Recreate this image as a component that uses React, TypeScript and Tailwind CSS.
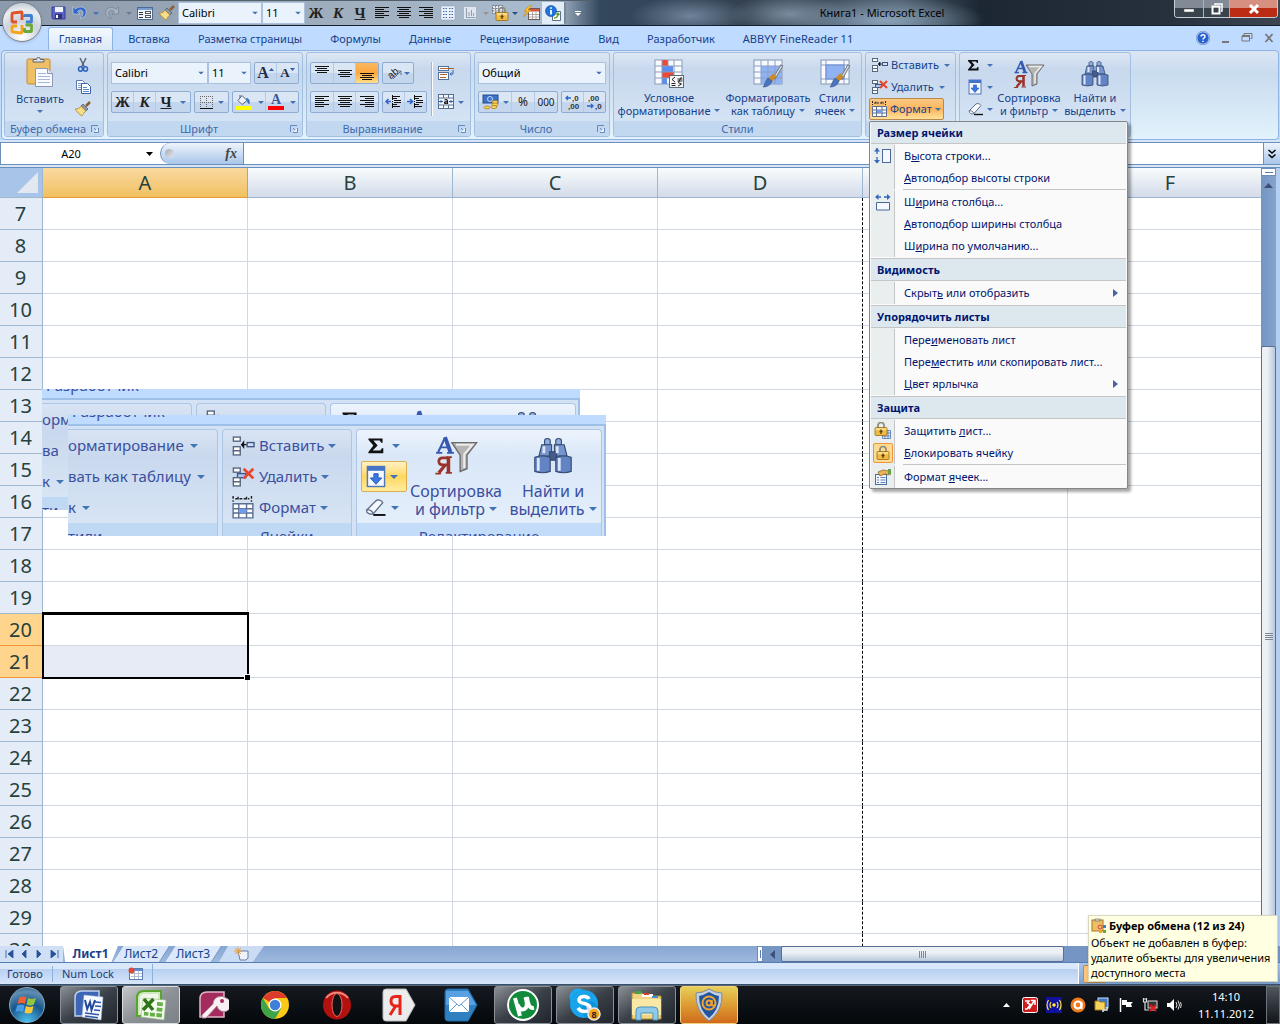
import React from 'react';

type IconProps = { w?: number; h?: number };

function Svg({ w = 16, h = 16, vb, children }: { w?: number; h?: number; vb?: string; children: React.ReactNode }) {
  return (
    <svg width={w} height={h} viewBox={vb ?? `0 0 ${w} ${h}`} className="block shrink-0" aria-hidden="true">
      {children}
    </svg>
  );
}

/* ---------- small glyphs ---------- */

const Caret = ({ color = '#4273b5', w = 6, h = 3 }: { color?: string; w?: number; h?: number }) => (
  <Svg w={w} h={h} vb={`0 0 ${w} ${h}`}><path d={`M0 0h${w}L${w / 2} ${h}z`} fill={color} /></Svg>
);

const Lines = ({ rows, color = '#111' }: { rows: [number, number, number][]; color?: string }) => (
  <Svg w={16} h={16}>
    {rows.map(([x, y, len], i) => <rect key={i} x={x} y={y} width={len} height={1} fill={color} />)}
  </Svg>
);

const AlignLeft = () => <Lines rows={[[1, 2, 14], [1, 4, 9], [1, 6, 14], [1, 8, 9], [1, 10, 14], [1, 12, 9]]} />;
const AlignCenter = () => <Lines rows={[[1, 2, 14], [3, 4, 10], [1, 6, 14], [3, 8, 10], [1, 10, 14], [3, 12, 10]]} />;
const AlignRight = () => <Lines rows={[[1, 2, 14], [6, 4, 9], [1, 6, 14], [6, 8, 9], [1, 10, 14], [6, 12, 9]]} />;
const AlignTop = () => <Lines rows={[[1, 1, 14], [3, 3, 10], [1, 5, 14], [3, 7, 10]]} />;
const AlignMiddle = () => <Lines rows={[[1, 5, 14], [3, 7, 10], [1, 9, 14], [3, 11, 10]]} />;
const AlignBottom = () => <Lines rows={[[1, 8, 14], [3, 10, 10], [1, 12, 14], [3, 14, 10]]} />;

const SaveIcon = () => (
  <Svg>
    <path d="M1 2h13v12H2l-1-1z" fill="#5a63c9" stroke="#3a3f94" />
    <rect x="4" y="2" width="8" height="5" fill="#eef2fb" />
    <rect x="4" y="9" width="7" height="5" fill="#2f3273" />
    <rect x="5" y="10" width="2" height="3" fill="#fff" />
  </Svg>
);
const UndoIcon = () => (
  <Svg><path d="M1 1.500v7.500h7L5.500 6.500C8 3.500 12 5 11 9c-.5 2-2 3.500-3 4.500 4-.5 7-4 6-8C12.500 1.500 7 1 3.500 4z" fill="#2f66cc" stroke="#dfe8f5" strokeWidth=".5" /></Svg>
);
const RedoIcon = () => (
  <Svg><path d="M14.500 2v7H8l2.300-2.300C8 4 4.200 5 4.700 9c.3 2 1.500 3 2.500 4.500C3 12.500 1 9 2 6c1.500-4 6.500-4.500 10-1.700z" fill="#a9b4c1" stroke="#6f7d8e" strokeWidth=".7" /></Svg>
);
const FormIcon = () => (
  <Svg>
    <rect x=".5" y="2.500" width="15" height="12" fill="#eef4fc" stroke="#4c6a96" />
    <rect x="1" y="3" width="14" height="2" fill="#7a9cd0" />
    <path d="M2 7.500h4M2 9.500h4M2 12.500h4" stroke="#333" />
    <rect x="8.500" y="6.500" width="5" height="2" fill="#fff" stroke="#555" />
    <rect x="8.500" y="10.500" width="5" height="2" fill="#fff" stroke="#555" />
  </Svg>
);
const BrushIcon = () => (
  <Svg>
    <path d="M15 1l-4 4" stroke="#8b5f33" strokeWidth="2.500" />
    <path d="M8 3l5 5-2 2-5-5z" fill="#8d97a8" stroke="#4d5665" strokeWidth=".7" />
    <path d="M6 5l5 5c-2 1-2.500 3-4 5-2-1-5-4-7-7 3 0 5-1 6-3z" fill="#f2d779" stroke="#a8802d" strokeWidth=".7" />
    <path d="M3 9l5 4M5 8l4 3" stroke="#fff3b8" strokeWidth=".7" />
  </Svg>
);
const ColumnsIcon = () => (
  <Svg>
    <rect x="1" y="1" width="14" height="14" fill="#eaf0f8" stroke="#8fa3bf" strokeWidth=".6" />
    <path d="M3 3.500h4M9 3.500h4M3 6.500h4M9 6.500h4M3 9.500h4M9 9.500h4M3 12.500h4M9 12.500h4" stroke="#4c6db0" strokeDasharray="1.500 1" />
  </Svg>
);
const ChartFaded = () => (
  <Svg>
    <rect x="1.500" y="1.500" width="13" height="13" fill="#dfe6ee" stroke="#a7b4c4" />
    <path d="M4.500 3v9.500h9M7 11V7M9.500 11V5M11.500 11V8" stroke="#8e9db0" fill="none" />
  </Svg>
);
const PadlockShape = ({ x = 0, y = 0 }: { x?: number; y?: number }) => (
  <g transform={`translate(${x} ${y})`}>
    <path d="M3 6V3.500a3 3 0 016 0V6" fill="none" stroke="#8f8a78" strokeWidth="1.700" />
    <rect x="0" y="5.500" width="12" height="8" rx="1" fill="#f0bb45" stroke="#9b6c17" strokeWidth=".8" />
    <rect x=".8" y="6.200" width="10.400" height="2" fill="#fbdf8f" />
    <path d="M6 7.500v4.500M4.500 9.500h3" stroke="#5b3d08" strokeWidth="1.300" />
  </g>
);
const LockCells = () => (
  <Svg w={18} h={18}>
    <path d="M1.500 1.500h10v8h-10zM1.500 4.500h10M1.500 7h10M4.500 1.500v8M7.500 1.500v8" stroke="#555e6a" fill="#e8eef5" strokeWidth=".8" strokeDasharray="2 1" />
    <PadlockShape x={5} y={3} />
  </Svg>
);
const PadlockIcon = () => <Svg w={16} h={16}><PadlockShape x={2} y={1} /></Svg>;
const ProtectIcon = () => (
  <Svg w={18} h={18}>
    <path d="M8.500 8.500h8v8h-8zM8.500 11h8M8.500 14h8M11 8.500v8M14 8.500v8" fill="#e7f0fb" stroke="#4c73ad" strokeWidth=".8" />
    <PadlockShape x={1} y={0} />
  </Svg>
);
const BoltTable = () => (
  <Svg w={17} h={16}>
    <rect x="5.500" y="3.500" width="11" height="11" fill="#fff" stroke="#6b5a5a" />
    <rect x="6" y="4" width="10" height="2.500" fill="#d8563d" />
    <path d="M6 9.500h10M6 12h10M9.500 6v8M13 6v8" stroke="#9e9a9a" strokeWidth=".8" />
    <path d="M7 0L1 6h3L0 12l8-7H5l4-5z" fill="#ffc535" stroke="#c97d13" strokeWidth=".6" />
  </Svg>
);
const InfoIcon = () => (
  <Svg w={17} h={16}>
    <path d="M7.500 6.500h8v9h-8z" fill="#fff" stroke="#5d6f8b" />
    <path d="M9 13c3 0 4-1 4-4M11.500 10L13 8l1.500 2" stroke="#5e9c22" fill="none" strokeWidth="1.300" />
    <circle cx="6" cy="6" r="5.500" fill="#1c74dc" stroke="#0d479a" strokeWidth=".6" />
    <path d="M6 5v4.500M6 2.300v1.500" stroke="#fff" strokeWidth="1.800" />
  </Svg>
);
const CutIcon = () => (
  <Svg w={14} h={16}>
    <path d="M4 1l4.500 9M10 1L5.500 10" stroke="#55606f" strokeWidth="1.400" />
    <ellipse cx="4.500" cy="12" rx="2" ry="2.200" fill="none" stroke="#2f62be" strokeWidth="1.500" />
    <ellipse cx="9.500" cy="12" rx="2" ry="2.200" fill="none" stroke="#2f62be" strokeWidth="1.500" />
  </Svg>
);
const CopyIcon = () => (
  <Svg>
    <path d="M1.500 1.500h6l2 2v7h-8z" fill="#fff" stroke="#5b79b0" />
    <path d="M3 4.500h4M3 6.500h4M3 8.500h3" stroke="#7fa0d5" />
    <path d="M6.500 4.500h6l3 3v7h-9z" fill="#fff" stroke="#3f65a8" />
    <path d="M8 8.500h4M8 10.500h6M8 12.500h6" stroke="#5a87cc" />
  </Svg>
);
const PasteIcon = () => (
  <Svg w={28} h={32}>
    <rect x="1" y="3" width="23" height="25" rx="1.500" fill="#efbf66" stroke="#c28b32" />
    <path d="M7 6V3.500h3.500a2 2 0 014 0H18V6z" fill="#dfe3ea" stroke="#5c6470" />
    <path d="M9.500 12.500h12l5 5v13h-17z" fill="#f7faff" stroke="#8b98b5" />
    <path d="M21.500 12.500v5h5" fill="#dbe5f5" stroke="#8b98b5" />
    <path d="M12 17.500h8M12 20.500h12M12 23.500h12M12 26.500h12" stroke="#a9b6d1" />
  </Svg>
);
const Launcher = () => (
  <Svg w={8} h={8}>
    <path d="M.5 7V.5H7" stroke="#6589bd" fill="none" />
    <path d="M7.500 3v4.500H3M3 3l3 3" stroke="#6589bd" fill="none" />
    <path d="M4 6.500h2.500V4" fill="#fff" stroke="#fff" strokeWidth=".5" />
  </Svg>
);
const BorderIcon = () => (
  <Svg w={15} h={15}>
    <path d="M1 1.500h13M1 7.500h13M1.500 1v12M7.500 1v12M13.500 1v12" stroke="#666" strokeDasharray="1 1" fill="none" />
    <rect x="1" y="13" width="13" height="1" fill="#111" />
  </Svg>
);
const FillIcon = () => (
  <Svg w={17} h={16}>
    <path d="M7 1.500l5 5-5 4-4-4z" fill="#eef3fb" stroke="#53617a" />
    <path d="M5 4V1" stroke="#53617a" />
    <path d="M11 4c3 0 4.500 2.500 3.500 6-2 0-2-2-3-4z" fill="#3b72cf" />
    <rect x="1" y="12" width="16" height="4" fill="#ffff00" />
  </Svg>
);
const OrientationIcon = () => (
  <Svg w={18} h={16}>
    <text x="2" y="11" fontSize="10" fontFamily="Liberation Sans" fill="#111" transform="rotate(-40 8 9)">ab</text>
    <path d="M7 14l8-8M15 10V6h-4" stroke="#63708a" fill="none" />
  </Svg>
);
const WrapIcon = () => (
  <Svg>
    <rect x=".5" y="1.500" width="10" height="4" fill="#fff" stroke="#54709e" />
    <path d="M2 3.500h14" stroke="#ad672d" />
    <rect x=".5" y="7.500" width="10" height="7" fill="#fff" stroke="#54709e" />
    <path d="M2 9.500h7M2 12.500h6" stroke="#ad672d" />
    <path d="M15 5v4h-3M13.500 7.500L12 9l1.500 1.500" stroke="#3768b8" fill="none" />
  </Svg>
);
const MergeIcon = () => (
  <Svg>
    <rect x=".5" y=".5" width="15" height="14" fill="#f4f8fd" stroke="#5a6e90" />
    <path d="M0 4h16M0 11h16M5.500 0v4M10.500 0v4M5.500 11v4M10.500 11v4" stroke="#5a6e90" />
    <path d="M6.500 6q3-1 3 1v3M9.500 7.500q-3 0-3 1.200t3 .3" stroke="#111" strokeWidth="1.200" fill="none" />
    <path d="M1 7.500h4M3 6v3M11 7.500h4M13 6v3" stroke="#2f62b4" />
  </Svg>
);
const Indent = ({ flip }: { flip?: boolean }) => (
  <Svg w={17} h={16}>
    <path d="M7 2.500h8M7 4.500h5M9 6.500h7M9 8.500h7M7 10.500h5M7 12.500h8" stroke="#111" strokeWidth="1.200" />
    <path d="M7.500 1v14" stroke="#111" strokeDasharray="1 1" />
    {flip ? <path d="M0 7.500h5M3 5l2.500 2.500L3 10" stroke="#2c63cc" strokeWidth="1.500" fill="none" /> : <path d="M1 7.500h5M3.500 5L1 7.500 3.500 10" stroke="#2c63cc" strokeWidth="1.500" fill="none" />}
  </Svg>
);
const CurrencyIcon = () => (
  <Svg w={17} h={16}>
    <rect x="1" y="1" width="15" height="8" fill="#3f72c6" stroke="#234c92" />
    <circle cx="8" cy="5" r="2.500" fill="none" stroke="#bfd5f5" />
    <ellipse cx="13" cy="8" rx="3" ry="1.600" fill="#f9d35e" stroke="#a97710" strokeWidth=".7" />
    <ellipse cx="13" cy="10.500" rx="3" ry="1.600" fill="#f9d35e" stroke="#a97710" strokeWidth=".7" />
    <ellipse cx="12" cy="13" rx="3" ry="1.600" fill="#f9d35e" stroke="#a97710" strokeWidth=".7" />
    <ellipse cx="5" cy="13.500" rx="3" ry="1.400" fill="#f9d35e" stroke="#a97710" strokeWidth=".7" />
  </Svg>
);
const Decimal = ({ more }: { more?: boolean }) => (
  <Svg w={18} h={18}>
    <text x={more ? 8 : 2} y="8" fontSize="8" fontWeight="700" fontFamily="Liberation Sans" fill="#333">{more ? ',0' : ',00'}</text>
    <text x={more ? 4 : 9} y="16" fontSize="8" fontWeight="700" fontFamily="Liberation Sans" fill="#333">{more ? ',00' : ',0'}</text>
    {more ? <path d="M2 5h5M4 3L2 5l2 2" stroke="#2c63cc" fill="none" strokeWidth="1.300" /> : <path d="M1 13h6M5 11l2 2-2 2" stroke="#2c63cc" fill="none" strokeWidth="1.300" />}
  </Svg>
);
const ConditionalIcon = () => (
  <Svg w={30} h={30}>
    <rect x="1" y="1" width="27" height="24" fill="#f8fbff" stroke="#8a9cb9" />
    <rect x="8" y="1" width="6" height="6" fill="#ee4a33" />
    <rect x="8" y="7" width="11" height="6" fill="#5a8ef0" />
    <rect x="8" y="13" width="12" height="6" fill="#ee4a33" />
    <rect x="8" y="19" width="5" height="6" fill="#5a8ef0" />
    <path d="M1 7h27M1 13h27M1 19h27M8 1v24M14 1v6M20 1v24" stroke="#8a9cb9" fill="none" />
    <rect x="15.500" y="16.500" width="14" height="12" fill="#f6f6f6" stroke="#5d6879" />
    <path d="M21 18l-3 2.500 3 2.500M17.500 24.500h4M17.500 26.500h4M23.500 20h5M23.500 22h5M27.500 18l-3 5M24 23.500l3.500 1.500-3.500 2" stroke="#222" fill="none" />
  </Svg>
);
const BigBrush = () => (
  <g>
    <path d="M29 6L21 20" stroke="#767b84" strokeWidth="3.200" />
    <path d="M28.500 7L22 18" stroke="#e7e9ee" strokeWidth="1.200" />
    <path d="M22 16l-5 5" stroke="#c9892e" strokeWidth="5" />
    <path d="M15 19l4 3c-1 4-5 6-9 6 2-2 2-6 5-9z" fill="#4b74bf" stroke="#36548d" strokeWidth=".6" />
  </g>
);
const TableFormatIcon = () => (
  <Svg w={31} h={30}>
    <rect x="1" y="1" width="28" height="24" fill="#f6f9fe" stroke="#8496b4" />
    <rect x="8" y="7" width="21" height="18" fill="#8fb2f3" />
    <path d="M1 7h28M1 13h28M1 19h28M8 1v24M15 1v24M22 1v24" stroke="#8b9fc4" fill="none" />
    <BigBrush />
  </Svg>
);
const CellStylesIcon = () => (
  <Svg w={31} h={30}>
    <rect x="1" y="1" width="28" height="24" fill="#f6f9fe" stroke="#8496b4" />
    <path d="M1 6h28M1 20h28M6 1v24M24 1v24" stroke="#8b9fc4" fill="none" />
    <rect x="6" y="6" width="18" height="14" fill="#8fb2f3" stroke="#6c8cd0" />
    <BigBrush />
  </Svg>
);
const InsertIcon = ({ w = 17, h = 16 }: IconProps) => (
  <Svg w={w} h={h} vb="0 0 17 16">
    <rect x="1.500" y="1.500" width="5" height="3" fill="#fff" stroke="#56667f" />
    <rect x="1.500" y="8.500" width="5" height="3" fill="#fff" stroke="#56667f" />
    <rect x="1.500" y="11.500" width="5" height="3" fill="#fff" stroke="#56667f" />
    <rect x="11.500" y="5.500" width="5" height="3" fill="#cfe0fb" stroke="#3d5680" />
    <path d="M7 7h4M9 5L7.500 7 9 9z" stroke="#111" fill="#111" strokeWidth=".8" />
  </Svg>
);
const DeleteIcon = ({ w = 17, h = 16 }: IconProps) => (
  <Svg w={w} h={h} vb="0 0 17 16">
    <rect x="1.500" y="1.500" width="5" height="3" fill="#fff" stroke="#56667f" />
    <rect x="4.500" y="5.500" width="6" height="3" fill="#a9c6f5" stroke="#3d5680" />
    <rect x="1.500" y="8.500" width="5" height="3" fill="#fff" stroke="#56667f" />
    <rect x="1.500" y="11.500" width="5" height="3" fill="#fff" stroke="#56667f" />
    <path d="M9 2l7 7M16 2L9 9" stroke="#e8452c" strokeWidth="2" />
  </Svg>
);
const FormatIcon = ({ w = 17, h = 17 }: IconProps) => (
  <Svg w={w} h={h} vb="0 0 17 17">
    <path d="M1.500 0v4M14.500 0v4M3 2h10M5 .5v3M11 .5v3" stroke="#222" strokeDasharray="2 1" fill="none" />
    <path d="M1.500 5.500h14v10h-14zM1.500 9h14M1.500 12h14M5.500 5.500v10M11 5.500v10" fill="#fff" stroke="#5b6f91" />
    <rect x="6" y="9" width="5" height="3" fill="#6f9cf0" />
  </Svg>
);
const SigmaIcon = ({ w = 12, h = 12 }: IconProps) => (
  <Svg w={w} h={h} vb="0 0 12 12"><path d="M1 1h10v3h-1L9 2.500H4.500L7.500 6 4 9.500h5.500L10.500 8h1v3.500H1v-1L4.500 6 1 2z" fill="#111" /></Svg>
);
const FillDownIcon = ({ w = 14, h = 16 }: IconProps) => (
  <Svg w={w} h={h} vb="0 0 14 16">
    <rect x="1" y="1" width="12" height="14" fill="#f5f9ff" stroke="#5277b8" />
    <rect x="1" y="1" width="12" height="3" fill="#4474ca" />
    <path d="M5.500 6h3v3H11l-4 4.500L3 9h2.500z" fill="#3976e6" stroke="#2351a7" strokeWidth=".6" />
  </Svg>
);
const EraserIcon = ({ w = 16, h = 14 }: IconProps) => (
  <Svg w={w} h={h} vb="0 0 16 14">
    <path d="M1 9l7-7c1-1 4-.5 5 1.500L6 11.500C4 12.500 1 11.500 1 9z" fill="#f7f9fc" stroke="#62718c" />
    <path d="M1 9c1-1 4 0 5 2.500" stroke="#62718c" fill="none" />
    <path d="M6 12.500h9" stroke="#111" strokeWidth="1.400" />
  </Svg>
);
const SortFilterIcon = ({ w = 32, h = 30 }: IconProps) => (
  <Svg w={w} h={h} vb="0 0 32 30">
    <path d="M13 6h18l-7 9v10l-5 2V15z" fill="#b4b4b4" stroke="#6c6c6c" />
    <path d="M16 7.500h12l-6 7v10" fill="none" stroke="#ececec" strokeWidth="1.500" />
    <g fill="none" stroke="#3559b0">
      <path d="M3 13L8 2.500" strokeWidth="1.500" /><path d="M8 2l4 11" strokeWidth="2.800" /><path d="M5 9.500h6M1.500 13.500h4.500M9.500 13.500h5" strokeWidth="1.300" />
    </g>
    <g fill="none" stroke="#9a342b">
      <path d="M10.500 16.500v11" strokeWidth="2.600" /><path d="M10 17H6.500q-3 0-3 2.500t3 2.700H10" strokeWidth="2" /><path d="M8 22.500L3.500 28" strokeWidth="2.300" /><path d="M8.500 28h4.500M1 28.500h4M9 16.500h4" strokeWidth="1.200" />
    </g>
  </Svg>
);
const BinocularsIcon = ({ w = 30, h = 28 }: IconProps) => (
  <Svg w={w} h={h} vb="0 0 30 28">
    <g stroke="#33496f" strokeWidth=".8">
      <path d="M9 3c0-2 4-2 4 0v3H9zM17 3c0-2 4-2 4 0v3h-4z" fill="#91aee0" />
      <path d="M7 6h7v8H5zM16 6h7l2 8h-9z" fill="#7594cd" />
      <rect x="12.500" y="11" width="5" height="6" fill="#445c8c" />
      <path d="M2 15q5.500-2 11 0v10q-5.500 2-11 0zM17 15q5.500-2 11 0v10q-5.500 2-11 0z" fill="#6384c4" />
    </g>
    <path d="M4.500 15.500v9M19.500 15.500v9M8.500 7v5M18 7v5" stroke="#dbe6fb" strokeWidth="2" />
  </Svg>
);

/* ---------- ribbon building blocks ---------- */

function Combo({ label, value, className }: { label: string; value: string; className: string }) {
  return (
    <span className={`relative block shrink-0 ${className}`}>
      <select aria-label={label} defaultValue={value} className="block h-full w-full appearance-none border border-[#abc1de] bg-[#eaf2fb] pl-[3px] pr-3 text-[11px] leading-4 text-black outline-none">
        <option>{value}</option>
      </select>
      <span className="pointer-events-none absolute right-1 top-1/2 -translate-y-1/2"><Caret /></span>
    </span>
  );
}

function Btn({ label, className = '', children }: { label: string; className?: string; children: React.ReactNode }) {
  return (
    <button type="button" aria-label={label} title={label} className={`flex shrink-0 items-center justify-center ${className}`}>
      {children}
    </button>
  );
}

function Cluster({ children, className = '' }: { children: React.ReactNode; className?: string }) {
  return (
    <div className={`flex h-[22px] shrink-0 divide-x divide-[#b4cbe8] overflow-hidden rounded-xs border border-[#8fadd3] bg-linear-to-b from-[#dbe6f4] from-50% to-[#c4d6ee] to-50% *:flex-1 ${className}`}>
      {children}
    </div>
  );
}

function Group({ title, className, launcher, children }: { title?: string; className: string; launcher?: boolean; children: React.ReactNode }) {
  return (
    <section className={`flex h-[85px] shrink-0 flex-col rounded-[3px] border border-[#a3bfdf] bg-linear-to-b from-[#dce7f4] via-[#c8d8ed] via-20% to-[#d7e6f6] ${className}`}>
      <div className="min-h-0 flex-1">{children}</div>
      <div className="flex h-[15px] shrink-0 items-center rounded-b-[3px] bg-[#c2d8f1] text-[11px] leading-[15px] text-[#3e6aaa]">
        <h2 className="flex-1 text-center">{title}</h2>
        {launcher && <Btn label={`${title}: параметры`} className="mr-1 w-2"><Launcher /></Btn>}
      </div>
    </section>
  );
}

function BigButton({ icon, lines, className }: { icon: React.ReactNode; lines: [string, string]; className: string }) {
  return (
    <button type="button" className={`flex shrink-0 flex-col items-center text-[11px] leading-[13px] whitespace-nowrap text-[#15428b] ${className}`}>
      <span className="flex h-9 items-center pt-1">{icon}</span>
      <span className="mt-px">{lines[0]}</span>
      <span className="flex items-center gap-1">{lines[1]}<Caret /></span>
    </button>
  );
}

/* ---------- title bar ---------- */

const Bold = () => <b className="font-['Liberation_Serif',serif] text-[15px] leading-4 text-[#222]">Ж</b>;
const Italic = () => <b className="font-['Liberation_Serif',serif] text-[15px] leading-4 text-[#222] italic">К</b>;
const Underline = () => <b className="font-['Liberation_Serif',serif] text-[15px] leading-4 text-[#222] underline">Ч</b>;

function TitleBar() {
  return (
    <header className="flex h-[26px] shrink-0 border-b border-[#14202e] bg-[radial-gradient(ellipse_60px_20px_at_690px_16px,#6e8299,transparent),radial-gradient(ellipse_60px_20px_at_790px_14px,#788b9e,transparent),radial-gradient(ellipse_100px_24px_at_885px_20px,#8aa2b8,transparent),linear-gradient(90deg,#8c9aac_0px,#9dacbc_300px,#a9bccf_555px,#33475d_600px,#33404e_760px,#4b5b6c_900px,#1c2733_980px,#27313d_1170px,#3b4652_100%)]">
      <div className="flex h-[25px] w-[590px] shrink-0 items-center border-t border-[#55606d] pl-12">
        <Btn label="Сохранить" className="w-[22px]"><SaveIcon /></Btn>
        <Btn label="Отменить" className="w-5"><UndoIcon /></Btn>
        <Btn label="Список отмены" className="w-[11px]"><Caret /></Btn>
        <Btn label="Вернуть" className="w-[22px]"><RedoIcon /></Btn>
        <Btn label="Список возврата" className="w-[11px]"><Caret color="#6f7d8e" /></Btn>
        <Btn label="Форма" className="w-[22px]"><FormIcon /></Btn>
        <Btn label="Формат по образцу" className="w-[22px]"><BrushIcon /></Btn>
        <Combo label="Шрифт" value="Calibri" className="h-[22px] w-[84px]" />
        <Combo label="Размер шрифта" value="11" className="h-[22px] w-[43px]" />
        <Btn label="Полужирный" className="w-[22px]"><Bold /></Btn>
        <Btn label="Курсив" className="w-[22px]"><Italic /></Btn>
        <Btn label="Подчеркнутый" className="w-[22px]"><Underline /></Btn>
        <Btn label="По левому краю" className="w-[22px]"><AlignLeft /></Btn>
        <Btn label="По центру" className="w-[22px]"><AlignCenter /></Btn>
        <Btn label="По правому краю" className="w-[22px]"><AlignRight /></Btn>
        <Btn label="Столбцы" className="w-[22px]"><ColumnsIcon /></Btn>
        <Btn label="Диаграмма" className="w-[22px]"><ChartFaded /></Btn>
        <Btn label="Список диаграмм" className="w-[9px]"><Caret color="#a08f86" /></Btn>
        <Btn label="Защита" className="w-5"><LockCells /></Btn>
        <Btn label="Список защиты" className="w-[10px]"><Caret color="#2b4f86" /></Btn>
        <Btn label="Таблица" className="w-[22px]"><BoltTable /></Btn>
        <Btn label="Сведения" className="h-[22px] w-[22px] bg-[#e3edf8]"><InfoIcon /></Btn>
        <span className="h-[22px] w-2 rounded-r-full border-r-2 border-[#7c8895]" />
        <Btn label="Настройка панели" className="w-6"><span className="flex flex-col items-center gap-px"><span className="h-px w-[6px] bg-white" /><Caret color="#fff" /></span></Btn>
      </div>
      <h1 className="mt-[5px] flex-1 text-center text-[11px] leading-4 text-black">Книга1 - Microsoft Excel</h1>
      <div className="mr-[2px] flex h-[18px] w-[104px] shrink-0 overflow-hidden rounded-b-[4px] border border-t-0 border-[#c5ccd3] text-white">
        <Btn label="Свернуть" className="w-[29px] border-r border-[#aab3bc] bg-linear-to-b from-[#828b95] from-50% to-[#39434e] to-50%"><Svg w={12} h={14}><rect x="1" y="7" width="10" height="3" fill="#fff" stroke="#555" strokeWidth=".5" /></Svg></Btn>
        <Btn label="Восстановить" className="w-[26px] border-r border-[#aab3bc] bg-linear-to-b from-[#828b95] from-50% to-[#39434e] to-50%"><Svg w={12} h={12}><path d="M4 2V1h7v7h-1" fill="none" stroke="#fff" strokeWidth="1.500" /><rect x="1.500" y="3.500" width="7" height="7" fill="none" stroke="#fff" strokeWidth="2" /></Svg></Btn>
        <Btn label="Закрыть" className="flex-1 bg-linear-to-b from-[#d78f80] from-45% to-[#bc2c14] to-45%"><Svg w={12} h={12}><path d="M2 2l8 8M10 2l-8 8" stroke="#fff" strokeWidth="3" /></Svg></Btn>
      </div>
    </header>
  );
}

function OfficeButton() {
  return (
    <button type="button" aria-label="Кнопка Office" className="absolute left-[2px] top-[2px] z-20 flex size-10 items-center justify-center rounded-full border border-[#7a8390] bg-[radial-gradient(circle_at_50%_90%,#ffffff,#ccd3dc_45%,#e9edf2_70%,#a9b2bd)] shadow">
      <Svg w={24} h={26}>
        <g fill="none" strokeWidth="2.800">
          <path d="M7 13H3q-1 0-1-1V5q0-1 1-1l8-1q1 0 1 1v7" stroke="#e0532a" />
          <path d="M14.500 8V7q0-.5.5-.5h6q.5 0 .5.500v5.500q0 .5-.5.500h-5" stroke="#3f7fd0" />
          <path d="M12 16v7q0 1-1 1l-8-1q-1 0-1-1v-4q0-1 1-1h4" stroke="#f2a51c" />
          <path d="M15.500 16H21q.5 0 .5.500V22q0 .5-.5.500h-6q-.5 0-.5-.5v-3" stroke="#69a83a" />
        </g>
      </Svg>
    </button>
  );
}

const tabs: [string, string][] = [
  ['Вставка', 'w-[70px]'],
  ['Разметка страницы', 'w-[132px]'],
  ['Формулы', 'w-[79px]'],
  ['Данные', 'w-[70px]'],
  ['Рецензирование', 'w-[119px]'],
  ['Вид', 'w-[49px]'],
  ['Разработчик', 'w-[96px]'],
  ['ABBYY FineReader 11', 'w-[138px]'],
];

function TabBar() {
  return (
    <nav className="flex h-6 shrink-0 items-end bg-[#bfdbff] pl-12 text-[11px] leading-4 text-[#15428b]">
      <button type="button" className="h-[23px] w-[65px] rounded-t-[3px] border border-b-0 border-[#8db2e3] bg-linear-to-b from-[#f4f9ff] to-[#dbe8f7]">Главная</button>
      <span className="w-px" />
      {tabs.map(([t, w]) => <button type="button" key={t} className={`h-[23px] shrink-0 whitespace-nowrap ${w}`}>{t}</button>)}
      <div className="ml-auto flex h-6 items-center gap-2 pr-1 text-[#6b6f76]">
        <Btn label="Справка" className="size-[14px]"><Svg w={14} h={14}><circle cx="7" cy="7" r="6.300" fill="#2663cf" stroke="#eef4fd" /><circle cx="7" cy="7" r="6.800" fill="none" stroke="#3b5f9c" strokeWidth=".5" /><path d="M5 5.500c0-2.500 4-2.500 4 0 0 1.500-2 1.500-2 3M7 9.800v1.300" stroke="#fff" fill="none" strokeWidth="1.500" /></Svg></Btn>
        <Btn label="Свернуть книгу" className="size-[14px]"><Svg w={14} h={14}><rect x="4" y="10" width="7" height="2" fill="#777" /></Svg></Btn>
        <Btn label="Восстановить книгу" className="size-[14px]"><Svg w={14} h={14}><path d="M4 4V2.500h8v5h-1.500M4 2.500h8" fill="none" stroke="#777" /><path d="M2 5h7.500v5H2z" fill="none" stroke="#777" /><path d="M2 5h8" stroke="#777" strokeWidth="2" /></Svg></Btn>
        <Btn label="Закрыть книгу" className="size-[14px]"><Svg w={14} h={14}><path d="M3.500 3l7 8M10.500 3l-7 8" stroke="#777" strokeWidth="1.800" /></Svg></Btn>
      </div>
    </nav>
  );
}

/* ---------- Format menu ---------- */

type Item = { text: [string, string, string]; icon?: React.ReactNode; sub?: boolean; divider?: boolean; on?: boolean };

const HeightIcon = () => (
  <Svg w={18} h={18}><path d="M3 1v6M3 10v6" stroke="#3567bd" strokeWidth="1.300" /><path d="M0 4.500L3 1l3 3.500zM0 13l3 3.500L6 13z" fill="#3567bd" /><rect x="8.500" y="2.500" width="8" height="13" fill="#f5f9ff" stroke="#4b6797" /></Svg>
);
const WidthIcon = () => (
  <Svg w={18} h={18}><path d="M2 4h5M10 4h5" stroke="#3567bd" strokeWidth="1.300" /><path d="M4.500 1L1 4l3.500 3zM13 1l3.500 3L13 7z" fill="#3567bd" /><path d="M2.500 17V9.500h13V17z" fill="#f5f9ff" stroke="#4b6797" /></Svg>
);
const CellFormatIcon = () => (
  <Svg w={18} h={18}>
    <rect x="1.500" y="6.500" width="11" height="10" fill="#f2f7fe" stroke="#4d6d9f" />
    <path d="M3 9.500h2M6.500 9.500h5M3 12h2M6.500 12h5M3 14.500h2M6.500 14.500h5" stroke="#5e84c0" />
    <path d="M4 4l5-2 6 1v4l-4-1-5 2z" fill="#e7b457" stroke="#8b5f1d" strokeWidth=".7" />
    <path d="M14 1h3v6l-3-1z" fill="#67a046" />
  </Svg>
);

const sections: { title: string; items: Item[] }[] = [
  {
    title: 'Размер ячейки',
    items: [
      { text: ['В', 'ы', 'сота строки...'], icon: <HeightIcon /> },
      { text: ['', 'А', 'втоподбор высоты строки'] },
      { text: ['Ш', 'и', 'рина столбца...'], icon: <WidthIcon />, divider: true },
      { text: ['', 'А', 'втоподбор ширины столбца'] },
      { text: ['Ш', 'и', 'рина по умолчанию...'] },
    ],
  },
  { title: 'Видимость', items: [{ text: ['Скрыт', 'ь', ' или отобразить'], sub: true }] },
  {
    title: 'Упорядочить листы',
    items: [
      { text: ['Пере', 'и', 'меновать лист'] },
      { text: ['Пере', 'м', 'естить или скопировать лист...'] },
      { text: ['', 'Ц', 'вет ярлычка'], sub: true },
    ],
  },
  {
    title: 'Защита',
    items: [
      { text: ['Защитить ', 'л', 'ист...'], icon: <ProtectIcon /> },
      { text: ['', 'Б', 'локировать ячейку'], icon: <PadlockIcon />, on: true },
      { text: ['Формат ', 'я', 'чеек...'], icon: <CellFormatIcon />, divider: true },
    ],
  },
];

function FormatMenu() {
  return (
    <div role="menu" className="absolute left-0 top-full z-40 mt-px w-[259px] rounded-xs border border-[#868686] bg-[#fafafa] text-left text-[11px] leading-4 text-[#00156e] shadow-[3px_3px_3px_rgba(0,0,0,0.35)]">
      {sections.map((s, i) => (
        <div key={s.title} className={i ? 'mx-px mt-px border-t border-[#c5c5c5]' : 'mx-px'}>
          <h3 className="flex h-[22px] items-center border-b border-[#c5c5c5] bg-[#dde7ee] pl-[6px] font-bold">{s.title}</h3>
          <div className="bg-linear-to-r from-[#e9eeee] from-[24px] to-[#fafafa] to-[24px] pt-px">
            {s.items.map((it) => (
              <React.Fragment key={it.text.join('')}>
                {it.divider && <div className="ml-8 h-[2px] border-t border-[#c5c5c5]" />}
                <button type="button" role="menuitem" className="flex h-[22px] w-full items-center text-left">
                  <span className="flex h-full w-6 shrink-0 items-center justify-center border-r border-[#c5c5c5]">
                    <span className={it.on ? 'flex size-5 items-center justify-center rounded-xs border border-[#f29536] bg-[#fcdc95]' : ''}>{it.icon}</span>
                  </span>
                  <span className="flex-1 pl-[9px] whitespace-nowrap">{it.text[0]}<u>{it.text[1]}</u>{it.text[2]}</span>
                  {it.sub && <span className="mr-2"><Svg w={5} h={8}><path d="M0 0l5 4-5 4z" fill="#4a62a0" /></Svg></span>}
                </button>
              </React.Fragment>
            ))}
          </div>
        </div>
      ))}
    </div>
  );
}

/* ---------- ribbon ---------- */

function Ribbon() {
  return (
    <div className="mx-px flex h-[90px] shrink-0 gap-[3px] rounded-[4px] border border-[#8db2e3] bg-linear-to-b from-[#dbe6f4] via-[#c9dbef] via-25% to-[#e2f3fc] pl-[2px] pt-px">
      <Group title="Буфер обмена" launcher className="w-[100px]">
        <div className="flex h-full">
          <button type="button" className="flex w-[66px] shrink-0 flex-col items-center pl-1 text-[11px] leading-[14px] text-[#15428b]">
            <span className="pt-[3px]"><PasteIcon /></span>
            <span className="mt-1 mb-1">Вставить</span>
            <Caret />
          </button>
          <div className="flex flex-1 flex-col items-center pt-px pr-4">
            <Btn label="Вырезать" className="h-[22px] w-6"><CutIcon /></Btn>
            <Btn label="Копировать" className="h-[22px] w-6"><CopyIcon /></Btn>
            <Btn label="Формат по образцу" className="h-[22px] w-6"><BrushIcon /></Btn>
          </div>
        </div>
      </Group>

      <Group title="Шрифт" launcher className="w-[196px]">
        <div className="flex flex-col gap-[7px] px-[3px] pt-[9px]">
          <div className="flex">
            <Combo label="Имя шрифта" value="Calibri" className="h-[22px] w-[97px]" />
            <Combo label="Размер" value="11" className="h-[22px] w-[43px]" />
            <Cluster className="ml-[3px] w-[45px]">
              <Btn label="Увеличить размер"><b className="font-['Liberation_Serif',serif] text-[16px] leading-5 text-[#1f2c44]">A</b><span className="-mt-2 rotate-180"><Caret color="#2d5fae" w={5} /></span></Btn>
              <Btn label="Уменьшить размер"><b className="font-['Liberation_Serif',serif] text-[13px] leading-5 text-[#1f2c44]">A</b><span className="-mt-2"><Caret color="#2d5fae" w={5} /></span></Btn>
            </Cluster>
          </div>
          <div className="flex gap-[3px]">
            <Cluster className="w-20">
              <Btn label="Полужирный"><Bold /></Btn>
              <Btn label="Курсив"><Italic /></Btn>
              <Btn label="Подчеркнутый" className="min-w-[34px] gap-2"><Underline /><Caret /></Btn>
            </Cluster>
            <Cluster className="w-[35px]"><Btn label="Границы" className="gap-1"><BorderIcon /><Caret /></Btn></Cluster>
            <Cluster className="w-[67px]">
              <Btn label="Цвет заливки" className="gap-[6px]"><FillIcon /><Caret /></Btn>
              <Btn label="Цвет текста" className="gap-[6px]">
                <span className="flex flex-col items-center"><b className="font-['Liberation_Serif',serif] text-[14px] leading-3 text-[#3b5998]">A</b><span className="h-1 w-4 bg-[#f00]" /></span><Caret />
              </Btn>
            </Cluster>
          </div>
        </div>
      </Group>

      <Group title="Выравнивание" launcher className="w-[165px]">
        <div className="flex pt-[9px] pl-[3px]">
          <div className="flex flex-col gap-[7px]">
            <div className="flex gap-[3px]">
              <Cluster className="w-[69px]">
                <Btn label="По верхнему краю"><AlignTop /></Btn>
                <Btn label="По середине"><AlignMiddle /></Btn>
                <Btn label="По нижнему краю" className="bg-linear-to-b from-[#f9b961] via-[#fda63b] to-[#fee08a]"><AlignBottom /></Btn>
              </Cluster>
              <Cluster className="w-8"><Btn label="Ориентация"><OrientationIcon /><Caret /></Btn></Cluster>
            </div>
            <div className="flex gap-[3px]">
              <Cluster className="w-[69px]">
                <Btn label="По левому краю"><AlignLeft /></Btn>
                <Btn label="По центру"><AlignCenter /></Btn>
                <Btn label="По правому краю"><AlignRight /></Btn>
              </Cluster>
              <Cluster className="w-[45px]">
                <Btn label="Уменьшить отступ"><Indent /></Btn>
                <Btn label="Увеличить отступ"><Indent flip /></Btn>
              </Cluster>
            </div>
          </div>
          <div className="ml-1 h-[54px] w-[2px] border-l border-[#9db7d8] bg-white" />
          <div className="flex flex-col gap-[7px] pl-[5px]">
            <Btn label="Перенос текста" className="h-[22px] w-4"><WrapIcon /></Btn>
            <Btn label="Объединить" className="h-[22px] gap-1"><MergeIcon /><Caret /></Btn>
          </div>
        </div>
      </Group>

      <Group title="Число" launcher className="w-[136px]">
        <div className="flex flex-col gap-[7px] px-[3px] pt-[9px]">
          <Combo label="Числовой формат" value="Общий" className="h-[22px] w-32" />
          <div className="flex gap-[3px]">
            <Cluster className="w-20 text-[12px] text-[#222]">
              <Btn label="Денежный формат" className="min-w-[33px] gap-1"><CurrencyIcon /><Caret /></Btn>
              <Btn label="Процентный формат">%</Btn>
              <Btn label="Разделитель тысяч" className="text-[10px]">000</Btn>
            </Cluster>
            <Cluster className="w-[45px]">
              <Btn label="Увеличить разрядность"><Decimal more /></Btn>
              <Btn label="Уменьшить разрядность"><Decimal /></Btn>
            </Cluster>
          </div>
        </div>
      </Group>

      <Group title="Стили" className="w-[249px]">
        <div className="flex pl-[2px] pt-px">
          <BigButton icon={<ConditionalIcon />} lines={['Условное', 'форматирование']} className="w-[106px]" />
          <BigButton icon={<TableFormatIcon />} lines={['Форматировать', 'как таблицу']} className="w-[92px]" />
          <BigButton icon={<CellStylesIcon />} lines={['Стили', 'ячеек']} className="w-[42px]" />
        </div>
      </Group>

      <Group className="w-[91px]">
        <div className="flex flex-col pl-[3px] pt-px text-[11px] leading-4 text-[#15428b]">
          <button type="button" className="flex h-[22px] items-center gap-[3px] pl-[2px]"><InsertIcon /><span>Вставить</span><span className="pl-[2px]"><Caret /></span></button>
          <button type="button" className="flex h-[22px] items-center gap-[3px] pl-[2px]"><DeleteIcon /><span>Удалить</span><span className="pl-[2px]"><Caret /></span></button>
          <div className="relative w-[75px]">
            <button type="button" aria-haspopup="menu" aria-expanded="true" className="flex h-[22px] w-full items-center gap-[2px] rounded-xs border border-[#b8894a] bg-linear-to-b from-[#fbc984] via-[#fdb457] to-[#fee19a] pl-px"><FormatIcon /><span>Формат</span><span className="pl-px"><Caret /></span></button>
            <FormatMenu />
          </div>
        </div>
      </Group>

      <Group className="w-[172px]">
        <div className="flex pt-px">
          <div className="flex w-9 shrink-0 flex-col pl-1">
            <Btn label="Сумма" className="h-[22px] gap-2"><SigmaIcon /><Caret /></Btn>
            <Btn label="Заполнить" className="h-[22px] gap-[5px]"><FillDownIcon /><Caret /></Btn>
            <Btn label="Очистить" className="h-[22px] gap-[3px]"><EraserIcon /><Caret /></Btn>
          </div>
          <BigButton icon={<SortFilterIcon />} lines={['Сортировка', 'и фильтр']} className="w-[66px]" />
          <BigButton icon={<BinocularsIcon />} lines={['Найти и', 'выделить']} className="w-[66px]" />
        </div>
      </Group>
    </div>
  );
}

/* ---------- formula bar ---------- */

function FormulaBar() {
  return (
    <div className="shrink-0 bg-[#d6e5f8] pt-[2px] pb-[2px]">
      <div className="flex h-[23px] border-y border-[#6a8fb8] bg-white text-[11px] leading-4 text-black">
        <div className="flex w-40 shrink-0 items-center border-l border-[#6a8fb8]">
          <input aria-label="Имя" defaultValue="A20" className="w-[140px] bg-transparent text-center outline-none" />
          <Btn label="Список имен" className="h-full w-4"><Svg w={7} h={4}><path d="M0 0h7L3.500 4z" fill="#000" /></Svg></Btn>
        </div>
        <div className="flex flex-1 border-r border-[#6a8fb8] bg-white">
          <div className="flex w-[84px] shrink-0 items-center justify-between rounded-l-full border-l border-r border-[#6a8fb8] bg-linear-to-b from-[#eef4fc] to-[#a9c6ea] pl-1 pr-[6px]">
            <span className="size-[9px] rounded-full bg-linear-to-br from-[#a7abb2] to-[#e6e9ee]" />
            <button type="button" aria-label="Вставить функцию" className="font-['Liberation_Serif',serif] text-[14px] leading-4 font-bold italic text-[#444]">fx</button>
          </div>
          <input aria-label="Строка формул" className="min-w-0 flex-1 bg-white px-1 outline-none" />
        </div>
        <Btn label="Развернуть строку формул" className="w-4 bg-linear-to-b from-[#edf4fc] to-[#a9c6ea]"><Svg w={8} h={10}><path d="M.5 1L4 4l3.500-3M.5 5.500L4 8.500l3.500-3" stroke="#000" strokeWidth="1.500" fill="none" /></Svg></Btn>
      </div>
    </div>
  );
}

/* ---------- pasted ribbon pictures on the sheet ---------- */

function PastedRibbon({ className, behind }: { className: string; behind?: boolean }) {
  const panel = 'shrink-0 border border-b-0 rounded-t-[4px] flex flex-col';
  const caret = <Caret w={8} h={4} />;
  return (
    <div className={`absolute h-[121px] w-[538px] overflow-hidden bg-[#bfdbff] text-[15px] leading-[31px] whitespace-nowrap text-[#3a50a0] ${className}`}>
      <div className="flex h-[9px] items-end overflow-hidden pl-1"><span className="mb-[3px] leading-5">Разработчик</span></div>
      <div className="flex h-28 gap-1 border-t-2 border-r-2 border-[#9dbfe8] bg-[#d3e3f5] pt-[3px] pr-[2px]">
        <div className={`${panel} w-[150px] rounded-l-none border-l-0 border-[#adc6e3] bg-linear-to-b from-[#d9e5f4] via-[#c9d8ed] via-25% to-[#d9e7f6]`}>
          <span className="flex h-[31px] items-center gap-[6px]">{behind ? 'орм' : <>орматирование{caret}</>}</span>
          <span className="flex h-[31px] items-center gap-[6px]">{behind ? 'ва' : <>вать как таблицу{caret}</>}</span>
          <span className="flex h-[31px] items-center gap-[6px]">к{caret}</span>
          <span className="h-4 bg-[#bfd8f3] leading-[26px]">{behind ? 'ти' : 'тили'}</span>
        </div>
        <div className={`${panel} w-[130px] border-[#adc6e3] bg-linear-to-b from-[#d9e5f4] via-[#c9d8ed] via-25% to-[#d9e7f6]`}>
          <span className="flex h-[31px] items-center gap-1 pl-2"><InsertIcon w={24} h={22} />Вставить{caret}</span>
          {!behind && (
            <>
              <span className="flex h-[31px] items-center gap-1 pl-2"><DeleteIcon w={24} h={22} />Удалить{caret}</span>
              <span className="flex h-[31px] items-center gap-1 pl-2"><FormatIcon w={24} h={24} />Формат{caret}</span>
              <span className="h-4 bg-[#bfd8f3] text-center leading-[26px]">Ячейки</span>
            </>
          )}
        </div>
        <div className={`${panel} flex-1 border-[#adc6e3] bg-linear-to-b from-[#edf4fd] via-[#dae7f8] via-25% to-[#e6f0fc]`}>
          <div className="flex h-[93px]">
            <div className="flex w-[50px] shrink-0 flex-col pl-1">
              <span className="flex h-[31px] items-center gap-2 pl-[6px]"><SigmaIcon w={17} h={17} />{caret}</span>
              <span className="flex h-[31px] items-center gap-1 rounded-xs border border-[#dcae4c] bg-linear-to-b from-[#fff3c4] via-[#ffd75e] to-[#ffec9e] pl-1"><FillDownIcon w={20} h={23} />{caret}</span>
              <span className="flex h-[31px] items-center gap-1 pl-1"><EraserIcon w={22} h={19} />{caret}</span>
            </div>
            <div className="flex w-[98px] flex-col items-center text-[16px] leading-[18px]"><span className="mt-1 mb-[6px]"><SortFilterIcon w={44} h={42} /></span>{!behind && <><span>Сортировка</span><span className="flex items-center gap-1">и фильтр{caret}</span></>}</div>
            <div className="flex flex-1 flex-col items-center text-[16px] leading-[18px]"><span className="mt-[6px] mb-[6px]"><BinocularsIcon w={42} h={40} /></span>{!behind && <><span>Найти и</span><span className="flex items-center gap-1">выделить{caret}</span></>}</div>
          </div>
          {!behind && <span className="h-4 bg-[#c3dcfa] text-center leading-[26px]">Редактирование</span>}
        </div>
      </div>
    </div>
  );
}

/* ---------- worksheet ---------- */

const columns = ['A', 'B', 'C', 'D', 'E', 'F'];
const rows = Array.from({ length: 24 }, (_, i) => i + 7);

function Sheet() {
  return (
    <div className="flex min-h-0 flex-1 border-t border-[#6a8fb8] bg-[#b4cff2] pr-1">
      <div className="relative min-w-0 flex-1 overflow-hidden bg-white">
        <table className="w-full table-fixed border-separate border-spacing-0 text-[20px] leading-6 text-[#27413e]">
          <colgroup>
            <col className="w-[43px]" /><col className="w-[205px]" /><col className="w-[205px]" /><col className="w-[205px]" /><col className="w-[205px]" /><col className="w-[205px]" /><col className="w-[205px]" />
          </colgroup>
          <thead>
            <tr className="h-[30px]">
              <th className="border-r border-b border-[#9eb6ce] bg-[#a9c4e9] p-0"><span className="flex justify-end pr-1"><Svg w={21} h={21}><path d="M21 0v21H0z" fill="#e3e8f0" /></Svg></span></th>
              {columns.map((c) => (
                <th key={c} scope="col" className={`border-r border-b p-0 font-normal ${c === 'A' ? 'border-[#f29536] bg-linear-to-b from-[#f9d99f] to-[#f1c15f]' : 'border-[#9eb6ce] bg-linear-to-b from-[#f9fcfd] to-[#d3dbe9]'}`}>{c}</th>
              ))}
            </tr>
          </thead>
          <tbody>
            {rows.map((r) => {
              const sel = r === 20 || r === 21;
              return (
                <tr key={r} className="h-8">
                  <th scope="row" className={`border-r border-b p-0 pr-px font-normal ${sel ? 'border-[#f29536] bg-[#ffd58d]' : 'border-[#9eb6ce] bg-[#e4ecf7]'}`}>{r}</th>
                  {columns.map((c) => (
                    <td key={c} className={`relative border-b border-b-[#d0d7e5] p-0 ${c === 'D' ? 'border-r border-r-black [border-right-style:dashed]' : 'border-r border-r-[#d0d7e5]'} ${c === 'A' && r === 21 ? 'bg-[#e7ebf5]' : ''}`}>
                      {c === 'A' && r === 20 && (
                        <span className="absolute -left-px -top-[2px] z-10 block h-[67px] w-[207px] border-2 border-t-[3px] border-black">
                          <span className="absolute -bottom-[3px] -right-[3px] size-[6px] border-l border-t border-white bg-black" />
                        </span>
                      )}
                    </td>
                  ))}
                </tr>
              );
            })}
          </tbody>
        </table>
        <PastedRibbon behind className="left-[42px] top-[221px]" />
        <PastedRibbon className="left-[68px] top-[247px]" />
      </div>
      <div className="flex w-[15px] shrink-0 flex-col bg-linear-to-r from-[#7295c2] to-[#86a4cc]">
        <div className="flex h-2 items-center justify-center border border-[#6a8fb8] bg-white"><span className="h-px w-2 bg-[#5a7bb0]" /></div>
        <Btn label="Вверх" className="h-[18px]"><Svg w={9} h={5}><path d="M0 5h9L4.500 0z" fill="#3f4f78" /></Svg></Btn>
        <div className="flex min-h-0 flex-1 flex-col">
          <div className="flex-[153]" />
          <div className="flex flex-[580] flex-col items-center justify-center gap-px rounded-xs border border-[#5a6f96] bg-linear-to-r from-[#edf1f6] from-40% to-[#b9c8dc]">
            {[0, 1, 2, 3].map((n) => <span key={n} className="h-px w-2 bg-[#7e8794]" />)}
          </div>
          <div className="h-5" />
        </div>
      </div>
    </div>
  );
}

function SheetTabs() {
  const nav = [
    ['Первый лист', 'M1 0v8M8 0L3 4l5 4z'],
    ['Предыдущий лист', 'M6 0L2 4l4 4z'],
    ['Следующий лист', 'M2 0l4 4-4 4z'],
    ['Последний лист', 'M8 0v8M1 0l5 4-5 4z'],
  ];
  return (
    <div className="flex h-[17px] shrink-0 border-b border-[#567db1] bg-linear-to-b from-[#86a6d3] to-[#9fb9de] text-[12px] leading-4 text-[#15428b]">
      <div className="flex w-[63px] shrink-0 items-center bg-[#cfe0f6] pl-[2px]">
        {nav.map(([n, d]) => <Btn key={n} label={n} className="w-[15px]"><Svg w={9} h={8}><path d={d} fill="#27509a" stroke="#27509a" strokeWidth=".8" /></Svg></Btn>)}
      </div>
      <div className="flex">
        <button type="button" className="w-[55px] bg-white font-bold [clip-path:polygon(0_0,100%_0,88%_100%,4%_100%)]">Лист1</button>
        <span className="-ml-[5px] flex w-[57px] bg-[#6f93c4] pr-px [clip-path:polygon(18%_0,100%_0,82%_100%,0_100%)]"><button type="button" className="w-14 bg-[#dbe8f9] [clip-path:polygon(18%_0,100%_0,82%_100%,0_100%)]">Лист2</button></span>
        <span className="-ml-[5px] flex w-[57px] bg-[#6f93c4] pr-px [clip-path:polygon(18%_0,100%_0,82%_100%,0_100%)]"><button type="button" className="w-14 bg-[#dbe8f9] [clip-path:polygon(18%_0,100%_0,82%_100%,0_100%)]">Лист3</button></span>
        <button type="button" aria-label="Вставить лист" className="-ml-[3px] flex w-[45px] items-center justify-center bg-[#cadcf4] [clip-path:polygon(20%_0,100%_0,75%_100%,0_100%)]">
          <Svg w={16} h={14}><path d="M4 4h10v7l-2 2H6z" fill="#eef3fb" stroke="#6a7d9c" /><path d="M4 0v8M0 4h8M1 1l6 6M7 1L1 7" stroke="#f0a030" /></Svg>
        </button>
      </div>
      <div className="min-w-0 flex-1" />
      <div className="flex w-[523px] shrink-0">
        <span className="flex w-[6px] items-center justify-center border border-[#6a8fb8] bg-white"><span className="h-2 w-px bg-[#5a7bb0]" /></span>
        <div className="flex flex-1 bg-[#7596c4]">
          <Btn label="Влево" className="w-[18px]"><Svg w={5} h={9}><path d="M5 0v9L0 4.500z" fill="#3f4f78" /></Svg></Btn>
          <span className="flex w-[283px] items-center justify-center gap-px rounded-xs border border-[#5a6f96] bg-linear-to-b from-[#edf1f6] from-40% to-[#b9c8dc]">
            {[0, 1, 2, 3].map((n) => <span key={n} className="h-[7px] w-px bg-[#7e8794]" />)}
          </span>
        </div>
      </div>
    </div>
  );
}

function StatusBar() {
  return (
    <footer className="flex h-[22px] shrink-0 items-center border-b border-[#36506f] bg-linear-to-b from-[#d9e8fb] from-30% via-[#b7d0f1] via-30% to-[#d7e6fa] text-[11px] leading-4 text-[#1c3a70]">
      <span className="w-[53px] border-r border-[#8fb0dc] pl-[7px]">Готово</span>
      <span className="w-[75px] pl-[9px]">Num Lock</span>
      <Btn label="Запись макроса" className="w-4"><Svg w={16} h={14}><rect x="1.500" y="1.500" width="13" height="11" fill="#fff" stroke="#5b7cb2" /><rect x="2" y="2" width="12" height="2" fill="#5d8ad4" /><path d="M3 6.500h11M3 9.500h11M6.500 4v8M10.500 4v8" stroke="#b1bfd4" /><circle cx="3.500" cy="3.500" r="3" fill="#dc4a32" /></Svg></Btn>
      <span className="ml-2 h-5 w-px bg-[#8fb0dc]" />
      <span className="ml-auto flex h-full w-[202px] items-center border-l border-white bg-linear-to-b from-[#a9c5ea] to-[#7fa3d2] pl-1">
        <Btn label="Обычный" className="h-[18px] w-6 rounded-xs border border-[#b8894a] bg-[#fdc678]"><Svg w={12} h={12}><path d="M.5.500h11v11H.5zM.5 4h11M.5 8h11M4 .5v11M8 .5v11" fill="#fff" stroke="#5b7cb2" /></Svg></Btn>
      </span>
    </footer>
  );
}

/* ---------- taskbar ---------- */

const Word = () => (
  <Svg w={32} h={32}><path d="M2 27V9q0-7 7-7h17v25z" fill="#3c65b5" stroke="#bcd0f2" strokeWidth="1.500" /><path d="M11 6l19 2-2 23-19-3z" fill="#f7faff" stroke="#9fb2d6" strokeWidth=".6" /><path d="M22 13l6 .5M22 17l6 .5M21 21l6 .5M12 24l14 1.800M12 27l13 1.800" stroke="#2d57a8" strokeWidth="1.600" /><path d="M12 11l2.200 9L17 13l1.500 8L22 11" stroke="#23489a" fill="none" strokeWidth="2" /></Svg>
);
const Excel = () => (
  <Svg w={32} h={32}>
    <path d="M2 27V9q0-7 7-7h17v25z" fill="#cfe8bd" stroke="#57a52e" strokeWidth="2" />
    <path d="M5 24V10q0-5 5-5h13v19z" fill="#fff" opacity=".7" />
    <path d="M8 9l23 2-2 20-23-3z" fill="#f5faf1" stroke="#8fbb74" strokeWidth=".6" />
    <g fill="#66b045">
      <path d="M22 13l6 .4-.3 3.800-5.700-.4zM21.800 18.500l5.700.4-.3 3.800-5.700-.4zM21.500 24l5.600.4-.3 4.200-5.500-.6zM15 23.500l5 .4-.2 3.800-5-.5zM9 22.800l4.500.4-.2 3.600-4.500-.4z" />
    </g>
    <path d="M9 10l9 11M18.500 10L8 21" stroke="#2c7414" strokeWidth="3.500" />
  </Svg>
);
const Access = () => (
  <Svg w={32} h={32}><path d="M3 28V10q0-7 7-7h17v25z" fill="#a52a5e" stroke="#e4b5c9" strokeWidth="1.500" /><path d="M29 9a7 7 0 11-9 8L9 29H5v-3l11-11a8 8 0 0113-6z" fill="#f6f0f3" stroke="#b07a92" /><circle cx="25" cy="12" r="2" fill="#a52a5e" /></Svg>
);
const Chrome = () => (
  <Svg w={30} h={30}><circle cx="15" cy="15" r="14" fill="#fbc916" /><path d="M15 15L2.900 8A14 14 0 0127.100 8H15z" fill="#dd3b2b" /><path d="M2.900 8A14 14 0 0015 29l6-10.500H9z" fill="#3da447" /><circle cx="15" cy="15" r="6.500" fill="#fff" /><circle cx="15" cy="15" r="5.200" fill="#3f7fd8" /></Svg>
);
const Opera = () => (
  <Svg w={30} h={30}><ellipse cx="15" cy="15" rx="14" ry="14.500" fill="#b3110f" /><path d="M4 8a14 14 0 0122 0" stroke="#f08a80" strokeWidth="2" fill="none" /><ellipse cx="15" cy="15" rx="5" ry="11.500" fill="#0f1114" stroke="#ef6a5f" /></Svg>
);
const Yandex = () => (
  <Svg w={34} h={34}><path d="M4 1h20l9 16-9 16H4q-3 0-3-3V4q0-3 3-3z" fill="#ececec" stroke="#b9b9b9" /><path d="M18 7v20M17.500 8.500h-4q-4.500 0-4.500 4.500t4.500 5h4M14 17.500L8 27" fill="none" stroke="#e8231a" strokeWidth="3" /></Svg>
);
const Mail = () => (
  <Svg w={34} h={34}><path d="M4 1h20l9 16-9 16H4q-3 0-3-3V4q0-3 3-3z" fill="#2f80c0" stroke="#1e6ba7" /><path d="M2 3h22l8 14H2z" fill="#6aaef0" opacity=".7" /><rect x="5" y="9" width="20" height="15" fill="#fff" /><path d="M5 9l10 9 10-9M5 24l8-8M25 24l-8-8" stroke="#5c9bd6" fill="none" /></Svg>
);
const Torrent = () => (
  <Svg w={34} h={34}><circle cx="17" cy="17" r="16" fill="#fff" /><circle cx="17" cy="17" r="14" fill="#118a3c" /><path d="M9 10l5 18M11.500 17q3 6 7 4t1-12M21 9q1 12 7 11" stroke="#fff" strokeWidth="4" fill="none" /></Svg>
);
const Skype = () => (
  <Svg w={34} h={34}><circle cx="10" cy="9" r="8.500" fill="#1da7ee" /><circle cx="16" cy="16" r="14" fill="#18a4ec" /><circle cx="22" cy="22" r="8.500" fill="#0b93dc" /><path d="M21 11c-2-4-10-3-10 1 0 5 11 2 11 8 0 4-9 5-12 0" stroke="#fff" strokeWidth="3.500" fill="none" /><path d="M18 18l6 3-3 6z" fill="#ddd" /><circle cx="26" cy="26" r="6" fill="#f7a41d" stroke="#e8e8e8" strokeWidth="1.500" /><text x="23.500" y="29.500" fontSize="9" fontWeight="700" fontFamily="Liberation Sans" fill="#222">8</text></Svg>
);
const Folder = () => (
  <Svg w={34} h={32}><path d="M2 4h10l2 3h17v23H2z" fill="#efd483" stroke="#b48e37" /><rect x="5" y="2" width="6" height="3" fill="#42a648" /><path d="M12 5h11v3H12z" fill="#fff" /><rect x="14" y="4" width="5" height="2" fill="#d3402e" /><rect x="22" y="7" width="6" height="2" fill="#3d8edb" /><path d="M2 10h29v16H2z" fill="#f9e8a5" /><path d="M6 31V22q0-4 4-4h14q4 0 4 4v9h-5v-7H11v7z" fill="#8fcbe8" stroke="#4c95bd" /></Svg>
);
const Shield = () => (
  <Svg w={30} h={34}><path d="M15 1q6 4 13 4 1 18-13 28Q1 23 2 5q7 0 13-4z" fill="#c6d1dd" stroke="#7a8ba0" /><path d="M15 4q5 3 10 4 0 14-10 22Q5 22 5 8q5-1 10-4z" fill="#21559f" /><circle cx="15" cy="15" r="6.500" fill="none" stroke="#f1a431" strokeWidth="2" /><circle cx="15" cy="15" r="2.500" fill="none" stroke="#f1a431" strokeWidth="2" /><path d="M18 12v5q2 2 3-1" stroke="#f1a431" fill="none" strokeWidth="1.500" /></Svg>
);

const apps: { name: string; icon: React.ReactNode; look: string }[] = [
  { name: 'Word', icon: <Word />, look: 'border-[#8a9099] bg-linear-to-br from-[#8b9096] via-[#3a4047] to-[#20262c]' },
  { name: 'Excel', icon: <Excel />, look: 'border-[#d9dde0] bg-linear-to-br from-[#c4c7c9] via-[#8d9297] to-[#7b8187]' },
  { name: 'Access', icon: <Access />, look: 'border-transparent' },
  { name: 'Chrome', icon: <Chrome />, look: 'border-transparent' },
  { name: 'Opera', icon: <Opera />, look: 'border-transparent' },
  { name: 'Яндекс', icon: <Yandex />, look: 'border-transparent' },
  { name: 'Почта', icon: <Mail />, look: 'border-transparent' },
  { name: 'uTorrent', icon: <Torrent />, look: 'border-[#8a9099] bg-linear-to-br from-[#8b9096] via-[#3a4047] to-[#20262c]' },
  { name: 'Skype', icon: <Skype />, look: 'border-[#8a9099] bg-linear-to-br from-[#8b9096] via-[#3a4047] to-[#20262c]' },
  { name: 'Проводник', icon: <Folder />, look: 'border-[#8a9099] bg-linear-to-br from-[#8b9096] via-[#3a4047] to-[#20262c]' },
  { name: 'Агент', icon: <Shield />, look: 'border-[#f1cf7c] bg-linear-to-b from-[#e6cf58] via-[#dd9c33] to-[#cf6a1d]' },
];

const tray: [string, React.ReactNode][] = [
  ['Скрытые значки', <Svg w={7} h={4}><path d="M0 4h7L3.500 0z" fill="#fff" /></Svg>],
  ['Антивирус', <Svg><rect x=".5" y=".5" width="15" height="15" rx="2" fill="#cf1c1c" stroke="#fff" /><path d="M3 4h4l-1.500 2 3 1.500L5 12H3M12.500 3.500L7 12M9 3.500h4V8" stroke="#fff" strokeWidth="1.500" fill="none" /></Svg>],
  ['Сеть Wi-Fi', <Svg><rect width="16" height="16" fill="#10119c" /><circle cx="8" cy="8" r="1.800" fill="#ffe733" /><path d="M5 5q-2 3 0 6M11 5q2 3 0 6M2.500 3q-3 5 0 10M13.500 3q3 5 0 10" stroke="#ffe733" fill="none" strokeWidth="1.200" /></Svg>],
  ['Avast', <Svg><circle cx="8" cy="8" r="7.500" fill="#ef7a1c" /><circle cx="8" cy="8" r="3.500" stroke="#fff" strokeWidth="2.200" fill="none" /><path d="M11.500 5v7" stroke="#fff" strokeWidth="2" /></Svg>],
  ['Архиватор', <Svg><rect x="4" y="1" width="10" height="10" fill="#3d79c8" stroke="#cfe1fb" /><path d="M1 4h4l1 1h5v8H1z" fill="#f7d45c" stroke="#a27b1a" /><path d="M13 10v3h-4v2" stroke="#d8e4f5" fill="none" strokeWidth="1.500" /></Svg>],
  ['Центр поддержки', <Svg><path d="M2.500 1v14" stroke="#fff" strokeWidth="1.500" /><path d="M4 3h5v2h6l-2 2 1 3H8V8H4z" fill="#fff" /></Svg>],
  ['Сеть', <Svg><path d="M1 2h4M1.500 1v4h3V1M3 5v8h4" stroke="#ddd" fill="none" strokeWidth="1.200" /><rect x="6" y="4" width="9" height="7" fill="#333" stroke="#ddd" /><path d="M8 13h6" stroke="#ddd" /><path d="M8 8l6 6M14 8l-6 6" stroke="#e01b1b" strokeWidth="2.200" /></Svg>],
  ['Громкость', <Svg><path d="M1 6h3l4-4v12l-4-4H1z" fill="#fff" /><path d="M10 5q2 3 0 6M12 3.500q3 4.500 0 9M14.500 5q1.500 3 0 6" stroke="#ddd" fill="none" /></Svg>],
];

function Taskbar() {
  return (
    <div className="flex h-[39px] shrink-0 items-center border-t border-[#5a6672] bg-linear-to-b from-[#151a20] to-[#05080b]">
      <button type="button" aria-label="Пуск" className="mx-[9px] flex size-9 shrink-0 items-center justify-center rounded-full border border-[#83a9c6] bg-[radial-gradient(circle_at_50%_100%,#4bc5f2,#1a568b_50%,#5f8eb1_80%,#1d4468)]">
        <Svg w={24} h={24}><path d="M4 5q4-2.500 7.500-.5L10 11q-4-2-7.500 0z" fill="#ee6134" /><path d="M13 5q4 2 8 0l-2 6.500q-4 2-7.500 0z" fill="#92c83f" /><path d="M2 12.500q4-2 7.500 0L8 19q-4-2-7.500 0z" fill="#4a9be6" /><path d="M11 13q4 2 7.500 0L17 19.500q-4 2-7.500 0z" fill="#fbc638" /></Svg>
      </button>
      <div className="ml-[6px] flex gap-1">
        {apps.map((a) => (
          <button type="button" key={a.name} aria-label={a.name} className={`flex h-[38px] w-[58px] items-center justify-center rounded-[3px] border ${a.look}`}>{a.icon}</button>
        ))}
      </div>
      <div className="ml-auto flex">
        {tray.map(([n, i]) => <Btn key={n} label={n} className="h-8 w-6">{i}</Btn>)}
      </div>
      <div className="flex w-20 shrink-0 flex-col items-center text-[11px] leading-[17px] text-white"><span>14:10</span><span>11.11.2012</span></div>
      <button type="button" aria-label="Свернуть все окна" className="h-[38px] w-[14px] shrink-0 border border-[#6b737b] bg-linear-to-b from-[#50575e] to-[#12161a]" />
    </div>
  );
}

function ClipboardTip() {
  return (
    <aside className="absolute right-[2px] bottom-[42px] z-30 w-[190px] border border-[#d8d8c0] bg-[#ffffe1] pt-[2px] pl-[2px] text-[11px] leading-[15px] whitespace-nowrap text-black shadow">
      <strong className="flex items-center gap-[2px]">
        <Svg w={16} h={15}><rect x="1" y="2" width="11" height="11" fill="#efbf66" stroke="#a8762a" /><path d="M4 3V1h5v2z" fill="#ddd" stroke="#555" strokeWidth=".6" /><circle cx="9" cy="9" r="2" fill="none" stroke="#d44" /><rect x="12" y="7" width="3" height="3" fill="#3f7fd0" /><rect x="8" y="12" width="3" height="3" fill="#f2a51c" /><rect x="12" y="12" width="3" height="3" fill="#69a83a" /></Svg>
        Буфер обмена (12 из 24)
      </strong>
      <p className="pt-[2px] pb-px">Объект не добавлен в буфер:<br />удалите объекты для увеличения<br />доступного места</p>
    </aside>
  );
}

export default function App() {
  return (
    <div className="relative flex h-screen w-full flex-col overflow-hidden bg-[#bfdbff] font-['Noto_Sans',sans-serif]">
      <TitleBar />
      <OfficeButton />
      <TabBar />
      <Ribbon />
      <FormulaBar />
      <Sheet />
      <SheetTabs />
      <StatusBar />
      <Taskbar />
      <ClipboardTip />
    </div>
  );
}
